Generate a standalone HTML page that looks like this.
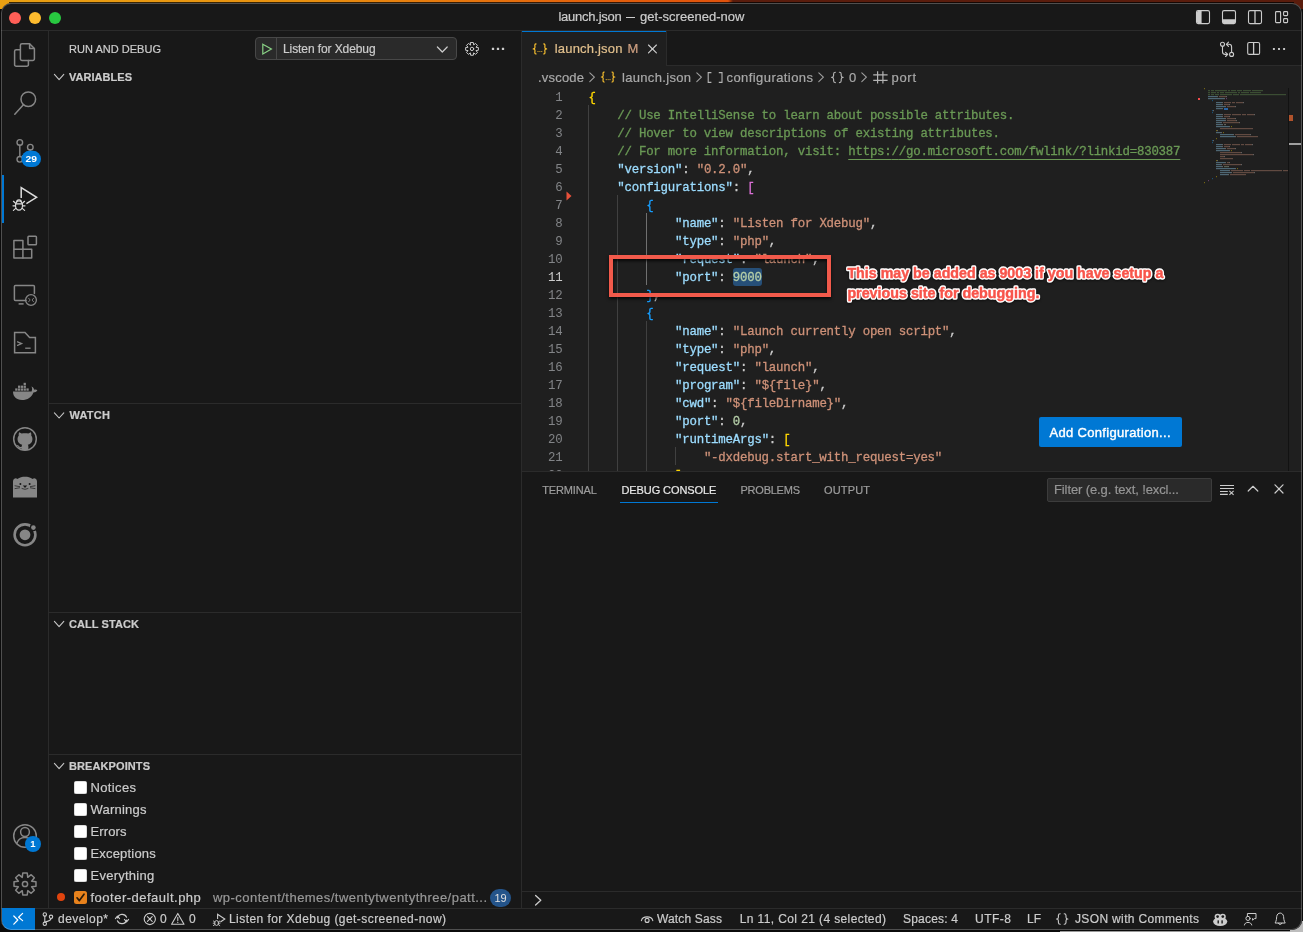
<!DOCTYPE html><html><head><meta charset="utf-8"><title>launch.json — get-screened-now</title><style>

html,body{margin:0;padding:0}
body{width:1303px;height:932px;overflow:hidden;position:relative;background:#0b0b0b;font-family:"Liberation Sans", sans-serif;}
.a{position:absolute}
.t{position:absolute;white-space:pre;line-height:20px;height:20px;-webkit-text-stroke:0.2px}
.ln{position:absolute;left:522px;width:40.5px;text-align:right;font-family:"Liberation Mono", monospace;font-size:12.4px;letter-spacing:-0.218px;line-height:18px;height:18px;color:#828487;margin-top:1.5px}
.cl{position:absolute;left:588.4px;font-family:"Liberation Mono", monospace;font-size:12.4px;line-height:18px;height:18px;white-space:pre;letter-spacing:-0.218px;color:#cccccc;margin-top:1.5px;-webkit-text-stroke:0.3px}
.g{position:absolute;width:1px;background:#404040}
.cb{position:absolute;left:74px;width:13px;height:13px;border-radius:2.5px;background:#ffffff;box-shadow:inset 0 0 0 0.5px #bdbdbd}
svg{position:absolute;overflow:visible}

</style></head><body><div id="root" style="position:absolute;left:0;top:0;width:1303px;height:932px;will-change:transform">
<div class="a" style="left:0;top:0;width:1303px;height:9px;background:linear-gradient(90deg,#e9a012 0px,#e8900f 300px,#e3600c 600px,#e0520c 728px,#5a1c0c 733px,#5a1c0c 1303px)"></div>
<div class="a" style="left:1060px;top:931px;width:243px;height:1px;background:#9a9a9a"></div>
<div class="a" style="left:9px;top:2px;width:1285px;height:1px;background:rgba(0,0,0,.75)"></div>
<div class="a" style="left:1290px;top:921px;width:13px;height:11px;background:#bdbdbd"></div>
<div class="a" id="win" style="left:1px;top:3px;width:1301px;height:927px;border-radius:10px;background:#181818;overflow:hidden">
</div>
<div class="a" style="left:1px;top:30px;width:1301px;height:1px;background:#2b2b2b"></div>
<div class="a" style="left:9px;top:12px;width:12px;height:12px;border-radius:50%;background:#ff5f57"></div>
<div class="a" style="left:29px;top:12px;width:12px;height:12px;border-radius:50%;background:#febc2e"></div>
<div class="a" style="left:49px;top:12px;width:12px;height:12px;border-radius:50%;background:#28c840"></div>
<div class="a" style="left:625.8px;top:17.1px;width:9.7px;height:1.2px;background:#cccccc"></div>
<div class="a" style="left:48px;top:31px;width:1px;height:877px;background:#2b2b2b"></div>
<div class="a" style="left:1.5px;top:175px;width:2px;height:48px;background:#0078d4"></div>
<div class="a" style="left:521px;top:31px;width:1px;height:877px;background:#2b2b2b"></div>
<div class="a" style="left:49px;top:403px;width:472px;height:1px;background:#2b2b2b"></div>
<div class="a" style="left:49px;top:612px;width:472px;height:1px;background:#2b2b2b"></div>
<div class="a" style="left:49px;top:754px;width:472px;height:1px;background:#2b2b2b"></div>
<div class="a" style="left:255px;top:37px;width:202px;height:23px;box-sizing:border-box;border:1px solid #484848;border-radius:4px;background:#2a2a2a"></div>
<div class="a" style="left:276px;top:38px;width:1px;height:21px;background:#484848"></div>
<div class="a" style="left:522px;top:31px;width:780px;height:35px;background:#181818"></div>
<div class="a" style="left:522px;top:65px;width:780px;height:1px;background:#2b2b2b"></div>
<div class="a" style="left:522px;top:31px;width:144px;height:35px;background:#1f1f1f"></div>
<div class="a" style="left:666px;top:31px;width:1px;height:35px;background:#2b2b2b"></div>
<div class="a" style="left:522px;top:31px;width:144px;height:1px;background:#0078d4"></div>
<div class="a" style="left:522px;top:66px;width:780px;height:405px;background:#1f1f1f"></div>
<div class="a" style="left:0;top:87px;width:1303px;height:384px;overflow:hidden"><div class="a" style="left:0;top:-87px;width:1303px;height:932px">
<div class="g" style="left:588px;top:105px;height:396px;background:#404040"></div>
<div class="g" style="left:617px;top:195px;height:306px;background:#404040"></div>
<div class="g" style="left:646px;top:213px;height:72px;background:#707070"></div>
<div class="g" style="left:646px;top:321px;height:180px;background:#404040"></div>
<div class="g" style="left:675px;top:447px;height:18px;background:#404040"></div>
<div class="a" style="left:733px;top:268px;width:29px;height:18px;border-radius:3px;background:#264f78"></div>
<div class="ln" style="top:87px;color:#828487">1</div>
<div class="cl" style="top:87px"><span style="color:#ffd700">{</span></div>
<div class="ln" style="top:105px;color:#828487">2</div>
<div class="cl" style="top:105px"><span style="color:#6a9955">    // Use IntelliSense to learn about possible attributes.</span></div>
<div class="ln" style="top:123px;color:#828487">3</div>
<div class="cl" style="top:123px"><span style="color:#6a9955">    // Hover to view descriptions of existing attributes.</span></div>
<div class="ln" style="top:141px;color:#828487">4</div>
<div class="cl" style="top:141px"><span style="color:#6a9955">    // For more information, visit: </span><span style="color:#6a9955;text-decoration:underline;text-underline-offset:4px;text-decoration-thickness:1px">https:</span><span style="color:#6a9955;text-decoration:underline;text-underline-offset:4px;text-decoration-thickness:1px">/</span><span style="color:#6a9955;text-decoration:underline;text-underline-offset:4px;text-decoration-thickness:1px">/go.microsoft.com/fwlink/?linkid=830387</span></div>
<div class="ln" style="top:159px;color:#828487">5</div>
<div class="cl" style="top:159px"><span style="color:#cccccc">    </span><span style="color:#9cdcfe">&quot;version&quot;</span><span style="color:#cccccc">: </span><span style="color:#ce9178">&quot;0.2.0&quot;</span><span style="color:#cccccc">,</span></div>
<div class="ln" style="top:177px;color:#828487">6</div>
<div class="cl" style="top:177px"><span style="color:#cccccc">    </span><span style="color:#9cdcfe">&quot;configurations&quot;</span><span style="color:#cccccc">: </span><span style="color:#da70d6">[</span></div>
<div class="ln" style="top:195px;color:#828487">7</div>
<div class="cl" style="top:195px"><span style="color:#cccccc">        </span><span style="color:#179fff">{</span></div>
<div class="ln" style="top:213px;color:#828487">8</div>
<div class="cl" style="top:213px"><span style="color:#cccccc">            </span><span style="color:#9cdcfe">&quot;name&quot;</span><span style="color:#cccccc">: </span><span style="color:#ce9178">&quot;Listen for Xdebug&quot;</span><span style="color:#cccccc">,</span></div>
<div class="ln" style="top:231px;color:#828487">9</div>
<div class="cl" style="top:231px"><span style="color:#cccccc">            </span><span style="color:#9cdcfe">&quot;type&quot;</span><span style="color:#cccccc">: </span><span style="color:#ce9178">&quot;php&quot;</span><span style="color:#cccccc">,</span></div>
<div class="ln" style="top:249px;color:#828487">10</div>
<div class="cl" style="top:249px"><span style="color:#cccccc">            </span><span style="color:#9cdcfe">&quot;request&quot;</span><span style="color:#cccccc">: </span><span style="color:#ce9178">&quot;launch&quot;</span><span style="color:#cccccc">,</span></div>
<div class="ln" style="top:267px;color:#cccccc">11</div>
<div class="cl" style="top:267px"><span style="color:#cccccc">            </span><span style="color:#9cdcfe">&quot;port&quot;</span><span style="color:#cccccc">: </span><span style="color:#b5cea8">9000</span></div>
<div class="ln" style="top:285px;color:#828487">12</div>
<div class="cl" style="top:285px"><span style="color:#cccccc">        </span><span style="color:#179fff">}</span><span style="color:#cccccc">,</span></div>
<div class="ln" style="top:303px;color:#828487">13</div>
<div class="cl" style="top:303px"><span style="color:#cccccc">        </span><span style="color:#179fff">{</span></div>
<div class="ln" style="top:321px;color:#828487">14</div>
<div class="cl" style="top:321px"><span style="color:#cccccc">            </span><span style="color:#9cdcfe">&quot;name&quot;</span><span style="color:#cccccc">: </span><span style="color:#ce9178">&quot;Launch currently open script&quot;</span><span style="color:#cccccc">,</span></div>
<div class="ln" style="top:339px;color:#828487">15</div>
<div class="cl" style="top:339px"><span style="color:#cccccc">            </span><span style="color:#9cdcfe">&quot;type&quot;</span><span style="color:#cccccc">: </span><span style="color:#ce9178">&quot;php&quot;</span><span style="color:#cccccc">,</span></div>
<div class="ln" style="top:357px;color:#828487">16</div>
<div class="cl" style="top:357px"><span style="color:#cccccc">            </span><span style="color:#9cdcfe">&quot;request&quot;</span><span style="color:#cccccc">: </span><span style="color:#ce9178">&quot;launch&quot;</span><span style="color:#cccccc">,</span></div>
<div class="ln" style="top:375px;color:#828487">17</div>
<div class="cl" style="top:375px"><span style="color:#cccccc">            </span><span style="color:#9cdcfe">&quot;program&quot;</span><span style="color:#cccccc">: </span><span style="color:#ce9178">&quot;${file}&quot;</span><span style="color:#cccccc">,</span></div>
<div class="ln" style="top:393px;color:#828487">18</div>
<div class="cl" style="top:393px"><span style="color:#cccccc">            </span><span style="color:#9cdcfe">&quot;cwd&quot;</span><span style="color:#cccccc">: </span><span style="color:#ce9178">&quot;${fileDirname}&quot;</span><span style="color:#cccccc">,</span></div>
<div class="ln" style="top:411px;color:#828487">19</div>
<div class="cl" style="top:411px"><span style="color:#cccccc">            </span><span style="color:#9cdcfe">&quot;port&quot;</span><span style="color:#cccccc">: </span><span style="color:#b5cea8">0</span><span style="color:#cccccc">,</span></div>
<div class="ln" style="top:429px;color:#828487">20</div>
<div class="cl" style="top:429px"><span style="color:#cccccc">            </span><span style="color:#9cdcfe">&quot;runtimeArgs&quot;</span><span style="color:#cccccc">: </span><span style="color:#ffd700">[</span></div>
<div class="ln" style="top:447px;color:#828487">21</div>
<div class="cl" style="top:447px"><span style="color:#cccccc">                </span><span style="color:#ce9178">&quot;-dxdebug.start_with_request=yes&quot;</span></div>
<div class="ln" style="top:465px;color:#828487">22</div>
<div class="cl" style="top:465px"><span style="color:#cccccc">            </span><span style="color:#ffd700">]</span><span style="color:#cccccc">,</span></div>
<svg style="left:566px;top:191px" width="6" height="10" viewBox="0 0 6 10"><path d="M0.5 0.5 L5.5 5 L0.5 9.5 Z" fill="#e8503a"/></svg>
</div></div>
<svg style="left:0;top:0" width="1303" height="932" viewBox="0 0 1303 932" opacity="0.38"><defs><clipPath id="mmc"><rect x="1193" y="87" width="95" height="384"/></clipPath></defs><g clip-path="url(#mmc)"><rect x="1204.0" y="88" width="1.0" height="1.2" fill="#ffd700"/><rect x="1208.0" y="90" width="2.0" height="1.2" fill="#6a9955"/><rect x="1211.0" y="90" width="3.0" height="1.2" fill="#6a9955"/><rect x="1215.0" y="90" width="12.0" height="1.2" fill="#6a9955"/><rect x="1228.0" y="90" width="2.0" height="1.2" fill="#6a9955"/><rect x="1231.0" y="90" width="5.0" height="1.2" fill="#6a9955"/><rect x="1237.0" y="90" width="5.0" height="1.2" fill="#6a9955"/><rect x="1243.0" y="90" width="8.0" height="1.2" fill="#6a9955"/><rect x="1252.0" y="90" width="11.0" height="1.2" fill="#6a9955"/><rect x="1208.0" y="92" width="2.0" height="1.2" fill="#6a9955"/><rect x="1211.0" y="92" width="5.0" height="1.2" fill="#6a9955"/><rect x="1217.0" y="92" width="2.0" height="1.2" fill="#6a9955"/><rect x="1220.0" y="92" width="4.0" height="1.2" fill="#6a9955"/><rect x="1225.0" y="92" width="12.0" height="1.2" fill="#6a9955"/><rect x="1238.0" y="92" width="2.0" height="1.2" fill="#6a9955"/><rect x="1241.0" y="92" width="8.0" height="1.2" fill="#6a9955"/><rect x="1250.0" y="92" width="11.0" height="1.2" fill="#6a9955"/><rect x="1208.0" y="94" width="2.0" height="1.2" fill="#6a9955"/><rect x="1211.0" y="94" width="3.0" height="1.2" fill="#6a9955"/><rect x="1215.0" y="94" width="4.0" height="1.2" fill="#6a9955"/><rect x="1220.0" y="94" width="12.0" height="1.2" fill="#6a9955"/><rect x="1233.0" y="94" width="6.0" height="1.2" fill="#6a9955"/><rect x="1240.0" y="94" width="46.0" height="1.2" fill="#6a9955"/><rect x="1208.0" y="96" width="9.0" height="1.2" fill="#9cdcfe"/><rect x="1217.0" y="96" width="1.0" height="1.2" fill="#cccccc"/><rect x="1219.0" y="96" width="7.0" height="1.2" fill="#ce9178"/><rect x="1226.0" y="96" width="1.0" height="1.2" fill="#cccccc"/><rect x="1208.0" y="98" width="16.0" height="1.2" fill="#9cdcfe"/><rect x="1224.0" y="98" width="1.0" height="1.2" fill="#cccccc"/><rect x="1226.0" y="98" width="1.0" height="1.2" fill="#da70d6"/><rect x="1212.0" y="100" width="1.0" height="1.2" fill="#179fff"/><rect x="1216.0" y="102" width="6.0" height="1.2" fill="#9cdcfe"/><rect x="1222.0" y="102" width="1.0" height="1.2" fill="#cccccc"/><rect x="1224.0" y="102" width="7.0" height="1.2" fill="#ce9178"/><rect x="1232.0" y="102" width="3.0" height="1.2" fill="#ce9178"/><rect x="1236.0" y="102" width="7.0" height="1.2" fill="#ce9178"/><rect x="1243.0" y="102" width="1.0" height="1.2" fill="#cccccc"/><rect x="1216.0" y="104" width="6.0" height="1.2" fill="#9cdcfe"/><rect x="1222.0" y="104" width="1.0" height="1.2" fill="#cccccc"/><rect x="1224.0" y="104" width="5.0" height="1.2" fill="#ce9178"/><rect x="1229.0" y="104" width="1.0" height="1.2" fill="#cccccc"/><rect x="1216.0" y="106" width="9.0" height="1.2" fill="#9cdcfe"/><rect x="1225.0" y="106" width="1.0" height="1.2" fill="#cccccc"/><rect x="1227.0" y="106" width="8.0" height="1.2" fill="#ce9178"/><rect x="1235.0" y="106" width="1.0" height="1.2" fill="#cccccc"/><rect x="1216.0" y="108" width="6.0" height="1.2" fill="#9cdcfe"/><rect x="1222.0" y="108" width="1.0" height="1.2" fill="#cccccc"/><rect x="1224.0" y="108" width="4.0" height="1.2" fill="#b5cea8"/><rect x="1212.0" y="110" width="1.0" height="1.2" fill="#179fff"/><rect x="1213.0" y="110" width="1.0" height="1.2" fill="#cccccc"/><rect x="1212.0" y="112" width="1.0" height="1.2" fill="#179fff"/><rect x="1216.0" y="114" width="6.0" height="1.2" fill="#9cdcfe"/><rect x="1222.0" y="114" width="1.0" height="1.2" fill="#cccccc"/><rect x="1224.0" y="114" width="7.0" height="1.2" fill="#ce9178"/><rect x="1232.0" y="114" width="9.0" height="1.2" fill="#ce9178"/><rect x="1242.0" y="114" width="4.0" height="1.2" fill="#ce9178"/><rect x="1247.0" y="114" width="7.0" height="1.2" fill="#ce9178"/><rect x="1254.0" y="114" width="1.0" height="1.2" fill="#cccccc"/><rect x="1216.0" y="116" width="6.0" height="1.2" fill="#9cdcfe"/><rect x="1222.0" y="116" width="1.0" height="1.2" fill="#cccccc"/><rect x="1224.0" y="116" width="5.0" height="1.2" fill="#ce9178"/><rect x="1229.0" y="116" width="1.0" height="1.2" fill="#cccccc"/><rect x="1216.0" y="118" width="9.0" height="1.2" fill="#9cdcfe"/><rect x="1225.0" y="118" width="1.0" height="1.2" fill="#cccccc"/><rect x="1227.0" y="118" width="8.0" height="1.2" fill="#ce9178"/><rect x="1235.0" y="118" width="1.0" height="1.2" fill="#cccccc"/><rect x="1216.0" y="120" width="9.0" height="1.2" fill="#9cdcfe"/><rect x="1225.0" y="120" width="1.0" height="1.2" fill="#cccccc"/><rect x="1227.0" y="120" width="9.0" height="1.2" fill="#ce9178"/><rect x="1236.0" y="120" width="1.0" height="1.2" fill="#cccccc"/><rect x="1216.0" y="122" width="5.0" height="1.2" fill="#9cdcfe"/><rect x="1221.0" y="122" width="1.0" height="1.2" fill="#cccccc"/><rect x="1223.0" y="122" width="16.0" height="1.2" fill="#ce9178"/><rect x="1239.0" y="122" width="1.0" height="1.2" fill="#cccccc"/><rect x="1216.0" y="124" width="6.0" height="1.2" fill="#9cdcfe"/><rect x="1222.0" y="124" width="1.0" height="1.2" fill="#cccccc"/><rect x="1224.0" y="124" width="1.0" height="1.2" fill="#b5cea8"/><rect x="1225.0" y="124" width="1.0" height="1.2" fill="#cccccc"/><rect x="1216.0" y="126" width="13.0" height="1.2" fill="#9cdcfe"/><rect x="1229.0" y="126" width="1.0" height="1.2" fill="#cccccc"/><rect x="1231.0" y="126" width="1.0" height="1.2" fill="#ffd700"/><rect x="1220.0" y="128" width="33.0" height="1.2" fill="#ce9178"/><rect x="1216.0" y="130" width="1.0" height="1.2" fill="#ffd700"/><rect x="1217.0" y="130" width="1.0" height="1.2" fill="#cccccc"/><rect x="1216.0" y="132" width="5.0" height="1.2" fill="#9cdcfe"/><rect x="1221.0" y="132" width="1.0" height="1.2" fill="#cccccc"/><rect x="1223.0" y="132" width="1.0" height="1.2" fill="#ffd700"/><rect x="1220.0" y="134" width="13.0" height="1.2" fill="#9cdcfe"/><rect x="1233.0" y="134" width="1.0" height="1.2" fill="#cccccc"/><rect x="1235.0" y="134" width="15.0" height="1.2" fill="#ce9178"/><rect x="1250.0" y="134" width="1.0" height="1.2" fill="#cccccc"/><rect x="1220.0" y="136" width="15.0" height="1.2" fill="#9cdcfe"/><rect x="1235.0" y="136" width="1.0" height="1.2" fill="#cccccc"/><rect x="1237.0" y="136" width="21.0" height="1.2" fill="#ce9178"/><rect x="1216.0" y="138" width="1.0" height="1.2" fill="#ffd700"/><rect x="1212.0" y="140" width="1.0" height="1.2" fill="#179fff"/><rect x="1213.0" y="140" width="1.0" height="1.2" fill="#cccccc"/><rect x="1212.0" y="142" width="1.0" height="1.2" fill="#179fff"/><rect x="1216.0" y="144" width="6.0" height="1.2" fill="#9cdcfe"/><rect x="1222.0" y="144" width="1.0" height="1.2" fill="#cccccc"/><rect x="1224.0" y="144" width="7.0" height="1.2" fill="#ce9178"/><rect x="1232.0" y="144" width="8.0" height="1.2" fill="#ce9178"/><rect x="1241.0" y="144" width="3.0" height="1.2" fill="#ce9178"/><rect x="1245.0" y="144" width="7.0" height="1.2" fill="#ce9178"/><rect x="1252.0" y="144" width="1.0" height="1.2" fill="#cccccc"/><rect x="1216.0" y="146" width="6.0" height="1.2" fill="#9cdcfe"/><rect x="1222.0" y="146" width="1.0" height="1.2" fill="#cccccc"/><rect x="1224.0" y="146" width="5.0" height="1.2" fill="#ce9178"/><rect x="1229.0" y="146" width="1.0" height="1.2" fill="#cccccc"/><rect x="1216.0" y="148" width="9.0" height="1.2" fill="#9cdcfe"/><rect x="1225.0" y="148" width="1.0" height="1.2" fill="#cccccc"/><rect x="1227.0" y="148" width="8.0" height="1.2" fill="#ce9178"/><rect x="1235.0" y="148" width="1.0" height="1.2" fill="#cccccc"/><rect x="1216.0" y="150" width="13.0" height="1.2" fill="#9cdcfe"/><rect x="1229.0" y="150" width="1.0" height="1.2" fill="#cccccc"/><rect x="1231.0" y="150" width="1.0" height="1.2" fill="#ffd700"/><rect x="1220.0" y="152" width="21.0" height="1.2" fill="#ce9178"/><rect x="1241.0" y="152" width="1.0" height="1.2" fill="#cccccc"/><rect x="1220.0" y="154" width="33.0" height="1.2" fill="#ce9178"/><rect x="1253.0" y="154" width="1.0" height="1.2" fill="#cccccc"/><rect x="1220.0" y="156" width="4.0" height="1.2" fill="#ce9178"/><rect x="1224.0" y="156" width="1.0" height="1.2" fill="#cccccc"/><rect x="1220.0" y="158" width="13.0" height="1.2" fill="#ce9178"/><rect x="1216.0" y="160" width="1.0" height="1.2" fill="#ffd700"/><rect x="1217.0" y="160" width="1.0" height="1.2" fill="#cccccc"/><rect x="1216.0" y="162" width="9.0" height="1.2" fill="#9cdcfe"/><rect x="1225.0" y="162" width="1.0" height="1.2" fill="#cccccc"/><rect x="1227.0" y="162" width="2.0" height="1.2" fill="#ce9178"/><rect x="1229.0" y="162" width="1.0" height="1.2" fill="#cccccc"/><rect x="1216.0" y="164" width="5.0" height="1.2" fill="#9cdcfe"/><rect x="1221.0" y="164" width="1.0" height="1.2" fill="#cccccc"/><rect x="1223.0" y="164" width="18.0" height="1.2" fill="#ce9178"/><rect x="1241.0" y="164" width="1.0" height="1.2" fill="#cccccc"/><rect x="1216.0" y="166" width="6.0" height="1.2" fill="#9cdcfe"/><rect x="1222.0" y="166" width="1.0" height="1.2" fill="#cccccc"/><rect x="1224.0" y="166" width="4.0" height="1.2" fill="#b5cea8"/><rect x="1228.0" y="166" width="1.0" height="1.2" fill="#cccccc"/><rect x="1216.0" y="168" width="19.0" height="1.2" fill="#9cdcfe"/><rect x="1235.0" y="168" width="1.0" height="1.2" fill="#cccccc"/><rect x="1237.0" y="168" width="1.0" height="1.2" fill="#ffd700"/><rect x="1220.0" y="170" width="9.0" height="1.2" fill="#9cdcfe"/><rect x="1229.0" y="170" width="1.0" height="1.2" fill="#cccccc"/><rect x="1231.0" y="170" width="12.0" height="1.2" fill="#ce9178"/><rect x="1244.0" y="170" width="6.0" height="1.2" fill="#ce9178"/><rect x="1251.0" y="170" width="31.0" height="1.2" fill="#ce9178"/><rect x="1283.0" y="170" width="8.0" height="1.2" fill="#ce9178"/><rect x="1291.0" y="170" width="1.0" height="1.2" fill="#cccccc"/><rect x="1220.0" y="172" width="11.0" height="1.2" fill="#9cdcfe"/><rect x="1231.0" y="172" width="1.0" height="1.2" fill="#cccccc"/><rect x="1233.0" y="172" width="21.0" height="1.2" fill="#ce9178"/><rect x="1254.0" y="172" width="1.0" height="1.2" fill="#cccccc"/><rect x="1220.0" y="174" width="8.0" height="1.2" fill="#9cdcfe"/><rect x="1228.0" y="174" width="1.0" height="1.2" fill="#cccccc"/><rect x="1230.0" y="174" width="16.0" height="1.2" fill="#ce9178"/><rect x="1216.0" y="176" width="1.0" height="1.2" fill="#ffd700"/><rect x="1212.0" y="178" width="1.0" height="1.2" fill="#179fff"/><rect x="1208.0" y="180" width="1.0" height="1.2" fill="#da70d6"/><rect x="1204.0" y="182" width="1.0" height="1.2" fill="#ffd700"/></g></svg>
<div class="a" style="left:1198px;top:98px;width:2px;height:2px;background:#f14c4c"></div>
<div class="a" style="left:1224px;top:108px;width:4px;height:2px;background:#2a64a5"></div>
<div class="a" style="left:1288px;top:88px;width:1px;height:383px;background:#121212"></div>
<div class="a" style="left:1289px;top:115px;width:4px;height:6px;background:#b0532c"></div>
<div class="a" style="left:1289px;top:143px;width:12px;height:2px;background:#a0a0a0"></div>
<div class="a" style="left:609px;top:255px;width:222px;height:42px;box-sizing:border-box;border:4.5px solid #f25a4b;box-shadow:0 2px 3px rgba(0,0,0,.75), inset 0 2px 3px rgba(0,0,0,.75)"></div>
<svg style="left:0;top:0" width="1303" height="932" viewBox="0 0 1303 932"><g font-family='"Liberation Sans", sans-serif' font-weight="700" font-size="14.7" style="filter:drop-shadow(0 1px 1px rgba(0,0,0,.55))">
<g fill="#ffffff" stroke="#ffffff" stroke-width="3.3" stroke-linejoin="round"><text x="847.4" y="278" textLength="316" lengthAdjust="spacingAndGlyphs">This may be added as 9003 if you have setup a</text>
<text x="847.4" y="298.3" textLength="192" lengthAdjust="spacingAndGlyphs">previous site for debugging.</text></g>
<g fill="#f8544a" stroke="#f8544a" stroke-width="0.45" stroke-linejoin="round"><text x="847.4" y="278" textLength="316" lengthAdjust="spacingAndGlyphs">This may be added as 9003 if you have setup a</text>
<text x="847.4" y="298.3" textLength="192" lengthAdjust="spacingAndGlyphs">previous site for debugging.</text></g></g></svg>
<div class="a" style="left:1039px;top:417px;width:143px;height:30px;background:#0078d4;border-radius:2px"></div>
<div class="a" style="left:522px;top:471px;width:780px;height:437px;background:#181818"></div>
<div class="a" style="left:522px;top:471px;width:780px;height:1px;background:#2b2b2b"></div>
<div class="a" style="left:620px;top:502px;width:98px;height:1px;background:#0078d4"></div>
<div class="a" style="left:1047px;top:478px;width:165px;height:24px;box-sizing:border-box;border:1px solid #3c3c3c;border-radius:2px;background:#2a2a2a"></div>
<div class="a" style="left:522px;top:891px;width:780px;height:1px;background:#2b2b2b"></div>
<div class="cb" style="top:780.5px"></div>
<div class="cb" style="top:802.5px"></div>
<div class="cb" style="top:824.5px"></div>
<div class="cb" style="top:846.5px"></div>
<div class="cb" style="top:868.5px"></div>
<div class="cb" style="top:890.5px;background:#e8821c;box-shadow:none"></div>
<svg style="left:74px;top:890.5px" width="13" height="13" viewBox="0 0 13 13"><path d="M3 6.8 L5.4 9.6 L10 3.2" fill="none" stroke="#2a1a08" stroke-width="1.7" stroke-linecap="round" stroke-linejoin="round"/></svg>
<div class="a" style="left:56.5px;top:893px;width:8px;height:8px;border-radius:50%;background:#e0440e"></div>
<div class="a" style="left:490px;top:889px;width:21px;height:18px;border-radius:9px;background:#24548a"></div>
<span class="t" style="left:490px;width:21px;text-align:center;top:887.8px;font-size:11px;color:#e0e0e0;-webkit-text-stroke:0">19</span>
<div class="a" style="left:1px;top:908px;width:1301px;height:22px;background:#181818;border-radius:0 0 10px 10px"></div>
<div class="a" style="left:1px;top:908px;width:1301px;height:1px;background:#2b2b2b"></div>
<div class="a" style="left:2px;top:908px;width:33px;height:22px;background:#0078d4;border-bottom-left-radius:9px"></div>
<span id="t_title" class="t" style="left:558.4px;top:7.0px;font-size:13px;font-weight:400;color:#cccccc;letter-spacing:-0.238px">launch.json</span>
<span id="t_title2" class="t" style="left:640px;top:7.0px;font-size:13px;font-weight:400;color:#cccccc;letter-spacing:0.022px">get-screened-now</span>
<span id="t_rad" class="t" style="left:69px;top:38.5px;font-size:11px;font-weight:400;color:#cccccc;letter-spacing:0.026px">RUN AND DEBUG</span>
<span id="t_cfg" class="t" style="left:283px;top:39.0px;font-size:12px;font-weight:400;color:#cccccc;letter-spacing:-0.092px">Listen for Xdebug</span>
<span id="t_var" class="t" style="left:69px;top:67.0px;font-size:11px;font-weight:700;color:#cccccc;letter-spacing:0.031px">VARIABLES</span>
<span id="t_watch" class="t" style="left:69.4px;top:405.0px;font-size:11px;font-weight:700;color:#cccccc;letter-spacing:0.271px">WATCH</span>
<span id="t_cs" class="t" style="left:69px;top:614.0px;font-size:11px;font-weight:700;color:#cccccc;letter-spacing:0.082px">CALL STACK</span>
<span id="t_bp" class="t" style="left:69px;top:756.0px;font-size:11px;font-weight:700;color:#cccccc;letter-spacing:0.094px">BREAKPOINTS</span>
<span id="t_b1" class="t" style="left:90.5px;top:777.8px;font-size:13px;font-weight:400;color:#cccccc;letter-spacing:0.357px">Notices</span>
<span id="t_b2" class="t" style="left:90.5px;top:799.8px;font-size:13px;font-weight:400;color:#cccccc;letter-spacing:0.209px">Warnings</span>
<span id="t_b3" class="t" style="left:90.5px;top:821.8px;font-size:13px;font-weight:400;color:#cccccc;letter-spacing:0.102px">Errors</span>
<span id="t_b4" class="t" style="left:90.5px;top:843.8px;font-size:13px;font-weight:400;color:#cccccc;letter-spacing:0.178px">Exceptions</span>
<span id="t_b5" class="t" style="left:90.5px;top:865.8px;font-size:13px;font-weight:400;color:#cccccc;letter-spacing:0.253px">Everything</span>
<span id="t_b6" class="t" style="left:90.5px;top:887.8px;font-size:13px;font-weight:400;color:#cccccc;letter-spacing:0.494px">footer-default.php</span>
<span id="t_b7" class="t" style="left:213px;top:887.8px;font-size:13px;font-weight:400;color:#989898;letter-spacing:0.468px">wp-content/themes/twentytwentythree/patt...</span>
<span id="t_tab" class="t" style="left:554.8px;top:38.5px;font-size:13px;font-weight:400;color:#e2c08d;letter-spacing:0.182px">launch.json</span>
<span id="t_tabm" class="t" style="left:627.6px;top:38.5px;font-size:13px;font-weight:400;color:#cfa081;letter-spacing:0.000px">M</span>
<span id="t_bc1" class="t" style="left:538px;top:67.8px;font-size:13px;font-weight:400;color:#a9a9a9;letter-spacing:0.198px">.vscode</span>
<span id="t_bc2" class="t" style="left:622px;top:67.8px;font-size:13px;font-weight:400;color:#a9a9a9;letter-spacing:0.322px">launch.json</span>
<span id="t_bc3" class="t" style="left:726.5px;top:67.8px;font-size:13px;font-weight:400;color:#a9a9a9;letter-spacing:0.427px">configurations</span>
<span id="t_bc4" class="t" style="left:849px;top:67.8px;font-size:13px;font-weight:400;color:#a9a9a9;letter-spacing:0.000px">0</span>
<span id="t_bc5" class="t" style="left:891.5px;top:67.8px;font-size:13px;font-weight:400;color:#a9a9a9;letter-spacing:0.698px">port</span>
<span id="t_p1" class="t" style="left:542.3px;top:480.0px;font-size:11px;font-weight:400;color:#9d9d9d;letter-spacing:-0.161px">TERMINAL</span>
<span id="t_p2" class="t" style="left:621.5px;top:480.0px;font-size:11px;font-weight:400;color:#e7e7e7;letter-spacing:-0.097px">DEBUG CONSOLE</span>
<span id="t_p3" class="t" style="left:740.5px;top:480.0px;font-size:11px;font-weight:400;color:#9d9d9d;letter-spacing:-0.234px">PROBLEMS</span>
<span id="t_p4" class="t" style="left:824px;top:480.0px;font-size:11px;font-weight:400;color:#9d9d9d;letter-spacing:0.153px">OUTPUT</span>
<span id="t_filter" class="t" style="left:1054px;top:480.0px;font-size:13px;font-weight:400;color:#959595;letter-spacing:-0.111px">Filter (e.g. text, !excl...</span>
<span id="t_add" class="t" style="-webkit-text-stroke:0.4px;left:1049.5px;top:422.5px;font-size:13px;font-weight:400;color:#ffffff;letter-spacing:0.321px">Add Configuration...</span>
<span id="t_s1" class="t" style="left:58px;top:909.0px;font-size:12px;font-weight:400;color:#cccccc;letter-spacing:0.469px">develop*</span>
<span id="t_s2" class="t" style="left:160px;top:909.0px;font-size:12px;font-weight:400;color:#cccccc;letter-spacing:0.000px">0</span>
<span id="t_s3" class="t" style="left:189px;top:909.0px;font-size:12px;font-weight:400;color:#cccccc;letter-spacing:0.000px">0</span>
<span id="t_s4" class="t" style="left:229px;top:909.0px;font-size:12px;font-weight:400;color:#cccccc;letter-spacing:0.444px">Listen for Xdebug (get-screened-now)</span>
<span id="t_s5" class="t" style="left:657px;top:909.0px;font-size:12px;font-weight:400;color:#cccccc;letter-spacing:0.158px">Watch Sass</span>
<span id="t_s6" class="t" style="left:739.7px;top:909.0px;font-size:12px;font-weight:400;color:#cccccc;letter-spacing:0.391px">Ln 11, Col 21 (4 selected)</span>
<span id="t_s7" class="t" style="left:903px;top:909.0px;font-size:12px;font-weight:400;color:#cccccc;letter-spacing:0.203px">Spaces: 4</span>
<span id="t_s8" class="t" style="left:975px;top:909.0px;font-size:12px;font-weight:400;color:#cccccc;letter-spacing:0.500px">UTF-8</span>
<span id="t_s9" class="t" style="left:1027px;top:909.0px;font-size:12px;font-weight:400;color:#cccccc;letter-spacing:-0.016px">LF</span>
<span id="t_s10" class="t" style="left:1075px;top:909.0px;font-size:12px;font-weight:400;color:#cccccc;letter-spacing:0.351px">JSON with Comments</span>
<svg style="left:0;top:0" width="1303" height="932" viewBox="0 0 1303 932" fill="none" stroke-linecap="round" stroke-linejoin="round">
<g stroke="#868686" stroke-width="1.5"><path d="M22 43.7 H29.6 L34.4 48.6 V58.8 a1.6 1.6 0 0 1 -1.6 1.6 H22 a1.6 1.6 0 0 1 -1.6 -1.6 V45.3 a1.6 1.6 0 0 1 1.6 -1.6 Z"/><path d="M29.6 43.9 V48.6 H34.2"/><path d="M20.2 49.7 H16.2 a1.6 1.6 0 0 0 -1.6 1.6 V64.7 a1.6 1.6 0 0 0 1.6 1.6 H26.8 a1.6 1.6 0 0 0 1.6 -1.6 V60.6"/></g>
<g stroke="#868686" stroke-width="1.5"><circle cx="28.3" cy="99.2" r="7.3"/><path d="M23.4 104.7 L14.8 114.3"/></g>
<g stroke="#868686" stroke-width="1.4"><circle cx="19.8" cy="142.4" r="2.8"/><circle cx="30.3" cy="147.2" r="2.8"/><circle cx="19.8" cy="159.3" r="2.8"/><path d="M19.8 145.2 V156.5"/><path d="M30.3 150 C30.3 154 26 154.5 22.5 156"/></g>
<rect x="21.4" y="150.8" width="19.6" height="16.2" rx="8.1" fill="#0078d4"/>
<text x="31.2" y="162.3" text-anchor="middle" font-family='"Liberation Sans", sans-serif' font-weight="700" font-size="9.5" fill="#ffffff" stroke="none" textLength="11.5" lengthAdjust="spacingAndGlyphs">29</text>
<g stroke="#dcdcdc" stroke-width="1.5" stroke-linecap="butt" stroke-linejoin="miter"><path d="M21.2 198 V187.6 L36.6 197.3 L26.4 203.6"/></g>
<g stroke="#dcdcdc" stroke-width="1.2"><ellipse cx="19" cy="205.6" rx="3.5" ry="4.6"/><path d="M15.8 203.8 H22.2"/><path d="M16.6 202.2 a2.4 2.4 0 0 1 4.8 0"/><path d="M13.4 201.3 L15.6 203.2 M13 205.8 H15.4 M13.4 210.4 L15.8 208.4 M24.6 201.3 L22.4 203.2 M25 205.8 H22.6 M24.6 210.4 L22.2 208.4"/></g>
<g stroke="#868686" stroke-width="1.5" stroke-linejoin="round"><path d="M13.9 240.4 H22.9 V249.2 H31.7 V258 H13.9 Z"/><path d="M13.9 249.2 H22.9 V258"/><rect x="28" y="236.3" width="8.4" height="8.4" rx="0.8"/></g>
<g stroke="#868686" stroke-width="1.5"><path d="M26 300.6 H15.4 a1 1 0 0 1 -1 -1 V286.6 a1 1 0 0 1 1 -1 H33.4 a1 1 0 0 1 1 1 V293.4"/><path d="M18.6 303.9 H23.6" stroke-linecap="butt"/><circle cx="31" cy="300" r="5.4" stroke-width="1.3"/><path d="M28.6 298.2 L30.2 300 L28.6 301.8 M33.6 298.2 L32 300 L33.6 301.8" stroke-width="0.9"/></g>
<g stroke="#868686" stroke-width="1.5" stroke-linejoin="miter"><path d="M14.6 332.6 H25 L29.6 337.4 H35.4 V352.8 H14.6 Z"/><path d="M17.6 341.8 L21.6 343.6 L17.6 345.4" stroke-width="1.3"/><path d="M25.2 348.2 H30.6" stroke-width="1.3" stroke-linecap="butt"/></g>
<g fill="#868686" stroke="none"><path d="M13 391.6 H31.6 C32.4 389.6 32.2 388 31.4 386.6 C33 387 34 388.4 34.2 389.8 C35.4 389.4 36.6 389.6 37.4 390.2 C36.6 391.8 35 392.4 33.4 392.4 C31.6 397 27.6 400 22 400 C16 400 13 396.6 13 391.6 Z"/>
<rect x="15.2" y="388.4" width="2.3" height="2.3"/>
<rect x="18" y="388.4" width="2.3" height="2.3"/>
<rect x="20.8" y="388.4" width="2.3" height="2.3"/>
<rect x="23.6" y="388.4" width="2.3" height="2.3"/>
<rect x="26.4" y="388.4" width="2.3" height="2.3"/>
<rect x="18" y="385.6" width="2.3" height="2.3"/>
<rect x="20.8" y="385.6" width="2.3" height="2.3"/>
<rect x="23.6" y="385.6" width="2.3" height="2.3"/>
<rect x="23.6" y="382.8" width="2.3" height="2.3"/>
</g>
<circle cx="25" cy="439" r="11.3" stroke="#868686" stroke-width="1.5"/>
<path fill="#868686" stroke="none" d="M19.2 432.2 L21.6 433.6 C23.8 433 26.2 433 28.4 433.6 L30.8 432.2 C31.4 433.6 31.4 434.8 31.2 435.6 C32.2 436.8 32.6 438.2 32.4 440 C32 443 30 444.4 27.8 444.8 C28.4 445.6 28.4 446.4 28.4 447.4 V450 H21.6 V448.4 C19.6 448.8 18.6 447.8 18 446.6 C17.6 445.8 17 445.4 16.6 445.2 C17.6 444.8 18.4 445.4 19 446.2 C19.6 447 20.6 447.2 21.6 446.8 C21.6 446 21.8 445.4 22.2 444.8 C20 444.4 18 443 17.6 440 C17.4 438.2 17.8 436.8 18.8 435.6 C18.6 434.8 18.6 433.6 19.2 432.2 Z"/>
<path fill="#868686" stroke="none" d="M13 497.4 V481.4 C13 479.8 13.8 478.6 15.2 478.4 C16 478.2 16.8 478.6 17.4 479 C19.6 477.4 22.2 476.8 25 476.8 C27.8 476.8 30.4 477.4 32.6 479 C33.2 478.6 34 478.2 34.8 478.4 C36.2 478.6 37 479.8 37 481.4 V497.4 Z"/>
<g fill="#181818" stroke="none"><circle cx="20.4" cy="484" r="1"/><circle cx="29.6" cy="484" r="1"/><path d="M22.8 485.6 H27.2 L25 488 Z"/></g><g stroke="#181818" stroke-width="0.7"><path d="M22 488.6 Q25 490.2 28 488.6 M19.6 486.6 L15 485.8 M19.6 487.8 L15 488.6 M30.4 486.6 L35 485.8 M30.4 487.8 L35 488.6"/></g>
<circle cx="25" cy="534.8" r="10.4" stroke="#868686" stroke-width="2.6"/><circle cx="25" cy="534.8" r="5.4" fill="#868686"/><circle cx="33.4" cy="527.4" r="3.6" fill="#181818"/><circle cx="33.4" cy="527.6" r="2.3" fill="#868686"/>
<g stroke="#868686" stroke-width="1.5"><circle cx="25" cy="836" r="11.3"/><circle cx="25" cy="832" r="4.4"/><path d="M16.8 843.6 C18 839.6 21 837.6 25 837.6 C29 837.6 32 839.6 33.2 843.6"/></g>
<circle cx="33" cy="844" r="8" fill="#0078d4"/><text x="33" y="847.4" text-anchor="middle" font-family='"Liberation Sans", sans-serif' font-weight="700" font-size="9.5" fill="#fff">1</text>
<path d="M22.77 873.02 L27.23 873.02 L27.76 877.35 L31.18 874.66 L34.34 877.82 L31.65 881.24 L35.98 881.77 L35.98 886.23 L31.65 886.76 L34.34 890.18 L31.18 893.34 L27.76 890.65 L27.23 894.98 L22.77 894.98 L22.24 890.65 L18.82 893.34 L15.66 890.18 L18.35 886.76 L14.02 886.23 L14.02 881.77 L18.35 881.24 L15.66 877.82 L18.82 874.66 L22.24 877.35 Z" fill="none" stroke="#868686" stroke-width="1.5" stroke-linejoin="round"/><circle cx="25" cy="884" r="2.6" fill="none" stroke="#868686" stroke-width="1.5"/>
<path d="M262.8 44.2 L271.4 49 L262.8 53.9 Z" stroke="#89d185" stroke-width="1.2" stroke-linejoin="miter"/>
<path d="M437.4 47 L442.3 52 L447.2 47" stroke="#cccccc" stroke-width="1.2"/>
<path d="M470.65 42.54 L473.35 42.54 L473.65 44.93 L475.54 43.45 L477.45 45.36 L475.97 47.25 L478.36 47.55 L478.36 50.25 L475.97 50.55 L477.45 52.44 L475.54 54.35 L473.65 52.87 L473.35 55.26 L470.65 55.26 L470.35 52.87 L468.46 54.35 L466.55 52.44 L468.03 50.55 L465.64 50.25 L465.64 47.55 L468.03 47.25 L466.55 45.36 L468.46 43.45 L470.35 44.93 Z" fill="none" stroke="#cccccc" stroke-width="1.0" stroke-linejoin="round"/><circle cx="472" cy="48.9" r="1.7" fill="none" stroke="#cccccc" stroke-width="1.0"/>
<rect x="491.85" y="47.8" width="2.3" height="2.2" rx="0.2" fill="#cccccc"/>
<rect x="496.85" y="47.8" width="2.3" height="2.2" rx="0.2" fill="#cccccc"/>
<rect x="501.85" y="47.8" width="2.3" height="2.2" rx="0.2" fill="#cccccc"/>
<path d="M54.4 74.4 L59.1 79.6 L63.8 74.4" stroke="#c5c5c5" stroke-width="1.1"/>
<path d="M54.4 412.79999999999995 L59.1 418.0 L63.8 412.79999999999995" stroke="#c5c5c5" stroke-width="1.1"/>
<path d="M54.4 621.4 L59.1 626.6 L63.8 621.4" stroke="#c5c5c5" stroke-width="1.1"/>
<path d="M54.4 763.4 L59.1 768.6 L63.8 763.4" stroke="#c5c5c5" stroke-width="1.1"/>
<g stroke="#cccccc" stroke-width="1.1"><rect x="1196.5" y="10.6" width="13" height="13" rx="1.6"/><rect x="1222.5" y="10.6" width="13" height="13" rx="1.6"/><rect x="1248.5" y="10.6" width="13" height="13" rx="1.6"/><path d="M1255 10.6 V23.6" stroke-linecap="butt" stroke-width="1.3"/><rect x="1275.6" y="11.6" width="5" height="11" rx="0.8"/><rect x="1283.6" y="11.6" width="4" height="4" rx="0.8"/><rect x="1283.6" y="18.6" width="4" height="4" rx="0.8"/></g>
<path d="M1197 12.2 a1.2 1.2 0 0 1 1.2 -1.2 H1201.6 V23.2 H1198.2 a1.2 1.2 0 0 1 -1.2 -1.2 Z" fill="#cccccc"/>
<path d="M1222.9 19.2 H1235.1 V22 a1.2 1.2 0 0 1 -1.2 1.2 H1224.1 a1.2 1.2 0 0 1 -1.2 -1.2 Z" fill="#cccccc"/>
<g stroke="#cccccc" stroke-width="1.1"><circle cx="1222.5" cy="44.3" r="2"/><circle cx="1231.6" cy="54.4" r="2"/><path d="M1222.5 46.4 V51.8 a2.6 2.6 0 0 0 2.6 2.6 H1227.4"/><path d="M1225.6 52.3 L1227.7 54.4 L1225.6 56.5"/><path d="M1231.6 52.3 V46.9 a2.6 2.6 0 0 0 -2.6 -2.6 H1226.7"/><path d="M1228.5 42.2 L1226.4 44.3 L1228.5 46.4"/></g>
<g stroke="#cccccc" stroke-width="1.1"><rect x="1247.7" y="42.5" width="11.9" height="11.9" rx="1.5"/><path d="M1253.6 42.5 V54.4" stroke-linecap="butt" stroke-width="1.3"/></g>
<rect x="1272.9" y="47.9" width="2" height="2.1" rx="0.4" fill="#cccccc"/>
<rect x="1278" y="47.9" width="2" height="2.1" rx="0.4" fill="#cccccc"/>
<rect x="1283.1" y="47.9" width="2" height="2.1" rx="0.4" fill="#cccccc"/>
<g stroke="#f7bf2f" stroke-width="1.2"><path d="M536.0 43.9 C534.1999999999999 43.9 535.0 46.3 535.0 47.3 C535.0 48.3 534.1999999999999 48.9 533.1999999999999 48.9 C534.1999999999999 48.9 535.0 49.5 535.0 50.5 C535.0 51.5 534.1999999999999 53.9 536.0 53.9"/><path d="M543.8 43.9 C545.5999999999999 43.9 544.8 46.3 544.8 47.3 C544.8 48.3 545.5999999999999 48.9 546.5999999999999 48.9 C545.5999999999999 48.9 544.8 49.5 544.8 50.5 C544.8 51.5 545.5999999999999 53.9 543.8 53.9"/></g><g fill="#f7bf2f"><circle cx="538.0" cy="51.5" r="0.55"/><circle cx="539.9" cy="51.5" r="0.55"/><circle cx="541.8" cy="51.5" r="0.55"/></g>
<g stroke="#f7bf2f" stroke-width="1.2"><path d="M604.2 72 C602.4 72 603.2 74.4 603.2 75.4 C603.2 76.4 602.4 77 601.4 77 C602.4 77 603.2 77.6 603.2 78.6 C603.2 79.6 602.4 82 604.2 82"/><path d="M612 72 C613.8 72 613 74.4 613 75.4 C613 76.4 613.8 77 614.8 77 C613.8 77 613 77.6 613 78.6 C613 79.6 613.8 82 612 82"/></g><g fill="#f7bf2f"><circle cx="606.2" cy="79.6" r="0.55"/><circle cx="608.1" cy="79.6" r="0.55"/><circle cx="610" cy="79.6" r="0.55"/></g>
<path d="M648.5 45 L656.4 52.9 M656.4 45 L648.5 52.9" stroke="#cccccc" stroke-width="1.15"/>
<path d="M589.8000000000001 72.8 L594.4000000000001 77.2 L589.8000000000001 81.6" stroke="#a0a0a0" stroke-width="1.1"/>
<path d="M696.8000000000001 72.8 L701.4000000000001 77.2 L696.8000000000001 81.6" stroke="#a0a0a0" stroke-width="1.1"/>
<path d="M818.8000000000001 72.8 L823.4000000000001 77.2 L818.8000000000001 81.6" stroke="#a0a0a0" stroke-width="1.1"/>
<path d="M861.8000000000001 72.8 L866.4000000000001 77.2 L861.8000000000001 81.6" stroke="#a0a0a0" stroke-width="1.1"/>
<g stroke="#b4b4b4" stroke-width="1.1" stroke-linejoin="miter" stroke-linecap="butt"><path d="M711.4 72.6 H708.2 V82.4 H711.4"/><path d="M718.8 72.6 H722 V82.4 H718.8"/></g>
<path d="M835.4000000000001 72.2 C833.8000000000001 72.2 833.6 72.8 833.6 74.0 L833.6 75.60000000000001 C833.6 76.80000000000001 832.8000000000001 77.4 831.7 77.4 C832.8000000000001 77.4 833.6 78.0 833.6 79.2 L833.6 80.80000000000001 C833.6 82.00000000000001 833.8000000000001 82.60000000000001 835.4000000000001 82.60000000000001 M839.4 72.2 C841.0 72.2 841.2 72.8 841.2 74.0 L841.2 75.60000000000001 C841.2 76.80000000000001 842.0 77.4 843.1 77.4 C842.0 77.4 841.2 78.0 841.2 79.2 L841.2 80.80000000000001 C841.2 82.00000000000001 841.0 82.60000000000001 839.4 82.60000000000001" stroke="#b4b4b4" stroke-width="1.15"/>
<g stroke="#b4b4b4" stroke-width="1.2" stroke-linecap="butt"><path d="M873.2 74.9 H887.6 M873.2 80.3 H887.6 M877.6 71.2 V83.4 M882.9 71.2 V83.4"/></g>
<g stroke="#cccccc" stroke-width="1.1" stroke-linecap="butt"><path d="M1220 485.5 H1234 M1220 488.5 H1234 M1220 491.5 H1227.8 M1220 494.4 H1227.8"/><path d="M1229.4 490.8 L1233.6 494.8 M1233.6 490.8 L1229.4 494.8"/></g>
<path d="M1248.2 491 L1253 486.3 L1257.8 491" stroke="#cccccc" stroke-width="1.2"/>
<path d="M1275 484.8 L1283 493 M1283 484.8 L1275 493" stroke="#cccccc" stroke-width="1.2"/>
<path d="M535.6 895.4 L540.8 900.2 L535.6 905" stroke="#cccccc" stroke-width="1.3"/>
<g stroke="#ffffff" stroke-width="1.2"><path d="M13.8 916 L17.8 920 L13.8 924.2"/><path d="M22.6 913.4 L18.6 917.2 L22.6 920.6"/></g>
<g stroke="#cccccc" stroke-width="1.1"><circle cx="44.8" cy="914.4" r="1.7"/><circle cx="44.8" cy="923.8" r="1.7"/><circle cx="51" cy="916.8" r="1.7"/><path d="M44.8 916.2 V922"/><path d="M51 918.6 C51 921 48 921 45.4 922"/></g>
<g stroke="#cccccc" stroke-width="1.1"><path d="M117.4 918 A4.9 4.9 0 0 1 126.6 917.2"/><path d="M126.6 920 A4.9 4.9 0 0 1 117.4 920.8"/><path d="M115.4 918.6 L117.4 916.2 L119.6 918.6" /><path d="M128.6 919.4 L126.6 921.8 L124.4 919.4"/></g>
<g stroke="#cccccc" stroke-width="1.1"><circle cx="149.8" cy="919" r="5.6"/><path d="M147.4 916.6 L152.2 921.4 M152.2 916.6 L147.4 921.4"/></g>
<g stroke="#cccccc" stroke-width="1.1"><path d="M177.8 913.4 L184 924.2 H171.6 Z"/><path d="M177.8 917.2 V920.6 M177.8 922.2 V922.4"/></g>
<g transform="translate(2 0.6)"><g stroke="#cccccc" stroke-width="1.1" stroke-linecap="butt" stroke-linejoin="miter"><path d="M215.6 918.4 V913.6 L222.8 918.4 L218.4 921.4"/></g><g stroke="#cccccc" stroke-width="0.9"><ellipse cx="214.6" cy="922.4" rx="1.9" ry="2.5"/><path d="M211.4 920.4 L212.8 921.4 M211.2 922.6 H212.6 M211.4 925 L212.8 924 M217.8 920.4 L216.4 921.4 M218 922.6 H216.6 M217.8 925 L216.4 924"/></g></g>
<g stroke="#cccccc" stroke-width="1.1"><path d="M641.4 920.6 C642.6 915.6 651.6 915.6 652.8 920.6"/><circle cx="647.1" cy="920.4" r="2"/></g>
<path d="M1060.2 913.8 C1058.6 913.8 1058.4 914.4 1058.4 915.5999999999999 L1058.4 917.2 C1058.4 918.4 1057.6 919 1056.5 919 C1057.6 919 1058.4 919.6 1058.4 920.8 L1058.4 922.4000000000001 C1058.4 923.6 1058.6 924.2 1060.2 924.2 M1064.2 913.8 C1065.8000000000002 913.8 1066.0 914.4 1066.0 915.5999999999999 L1066.0 917.2 C1066.0 918.4 1066.8000000000002 919 1067.9 919 C1066.8000000000002 919 1066.0 919.6 1066.0 920.8 L1066.0 922.4000000000001 C1066.0 923.6 1065.8000000000002 924.2 1064.2 924.2" stroke="#cccccc" stroke-width="1.1"/>
<g fill="#cccccc" stroke="none"><ellipse cx="1220.2" cy="921.6" rx="7.1" ry="4.4"/><circle cx="1217.7" cy="916.8" r="3.1"/><circle cx="1222.7" cy="916.8" r="3.1"/></g><g fill="#181818" stroke="none"><circle cx="1217.6" cy="916.6" r="1.35"/><circle cx="1222.8" cy="916.6" r="1.35"/><rect x="1217.5" y="920.3" width="1.4" height="3.2" rx="0.5"/><rect x="1221.4" y="920.3" width="1.4" height="3.2" rx="0.5"/></g>
<g stroke="#cccccc" stroke-width="1"><path d="M1247.4 915.6 V913.5 H1256 V918.6 H1254.4 L1252.6 920.2 V918.6"/><circle cx="1248" cy="918.4" r="2.1"/><path d="M1244.4 925 C1244.6 921.4 1251.4 921.4 1251.8 925"/></g>
<g stroke="#cccccc" stroke-width="1"><path d="M1275.3 922.7 C1276.6 920.6 1276.5 918.4 1276.7 916.6 C1277.2 911.9 1283.1 911.9 1283.6 916.6 C1283.8 918.4 1283.7 920.6 1285 922.7 Z"/><path d="M1278.4 923.2 a1.8 1.6 0 0 0 3.5 0"/></g>
</svg>
<div class="a" style="left:1px;top:3px;width:1301px;height:927px;border-radius:10px;box-shadow:inset 0 0 0 1px rgba(255,255,255,.24);pointer-events:none"></div>
</div></body></html>
